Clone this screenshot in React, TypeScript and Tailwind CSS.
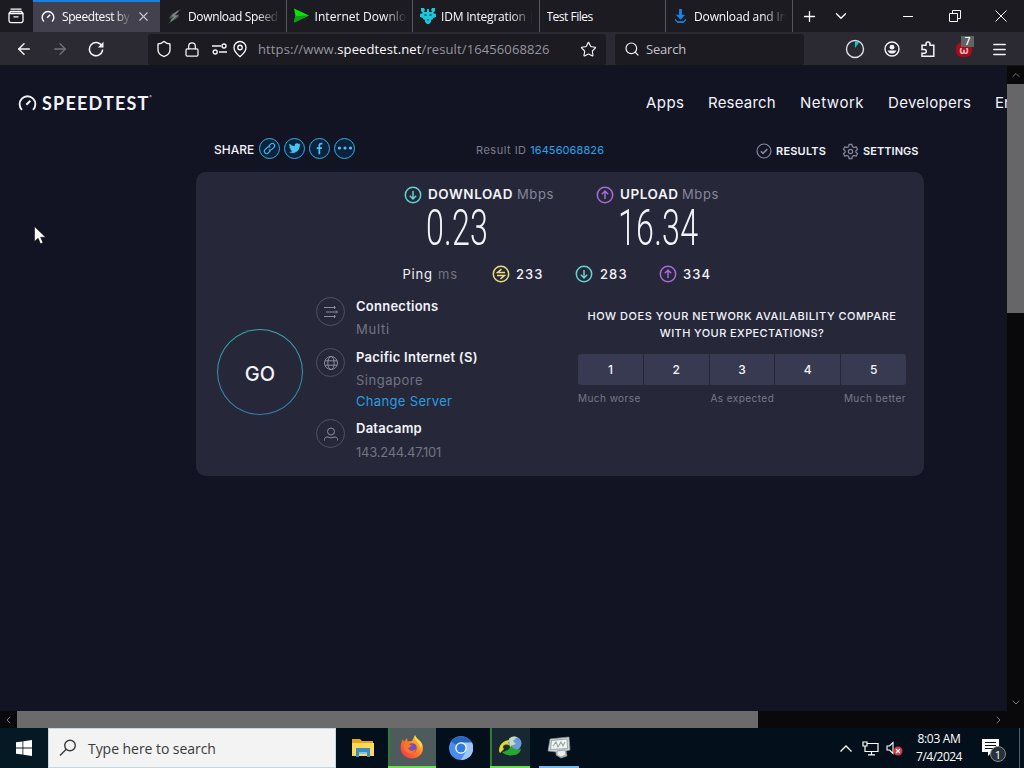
import type { ReactNode } from "react";
import {
  ArrowLeft,
  ArrowRight,
  ChevronDown,
  ChevronUp,
  ChevronLeft,
  ChevronRight,
  Lock,
  MapPin,
  Menu,
  Plus,
  Search,
  Shield,
  Star,
  X,
} from "lucide-react";

const ui = "font-['Open_Sans','Noto_Sans',sans-serif]";
const fade = "[mask-image:linear-gradient(to_right,black_75%,transparent_100%)]";

function Gauge({ className }: { className: string }) {
  return (
    <svg viewBox="0 0 20 18" className={className} fill="none" stroke="currentColor" strokeWidth="2">
      <path d="M4.2 16.2A8.3 8.3 0 1 1 15.8 16.2" />
      <path d="M8.8 10.8L13 6.6" strokeWidth="2.2" />
    </svg>
  );
}

function Tab({ title, icon, textClass, plain }: { title: string; icon?: ReactNode; textClass?: string; plain?: boolean }) {
  return (
    <div className="flex h-8 w-[126.5px] shrink-0 items-center border-r border-[#56555f] pl-[7px]">
      {icon && <span className="mr-[6px] flex w-[15px] shrink-0 justify-center">{icon}</span>}
      <span className={`w-[92px] overflow-hidden pt-[2px] whitespace-nowrap text-[12px] ${textClass ?? ""} ${plain ? "" : fade}`}>
        {title}
      </span>
    </div>
  );
}

function TabBar() {
  return (
    <div className={`flex h-8 shrink-0 items-center bg-[#1c1b22] text-[#fbfbfe] ${ui}`}>
      <div className="flex w-[33px] justify-center pr-px">
        <svg viewBox="0 0 16 16" className="h-4 w-4" fill="none" stroke="currentColor" strokeWidth="1.3">
          <path d="M2.5 1.2h11M1 5.500v7.300a1.8 1.8 0 0 0 1.8 1.8h10.400a1.8 1.8 0 0 0 1.8-1.8V5.500zM1 5.500l1.500-2h11l1.500 2M5.500 8.800h5" />
        </svg>
      </div>
      <div className="flex h-8 w-[127px] items-center border-t-2 border-[#1581e8] bg-[#42414d] pl-2">
        <Gauge className="mb-[2px] h-[13px] w-[14px]" />
        <span className={`ml-[7px] w-[70px] overflow-hidden whitespace-nowrap text-[12px] tracking-[-0.4px] ${fade}`}>
          Speedtest by
        </span>
        <X className="mb-[2px] ml-[4px] h-[15px] w-[15px] text-[#c8c8d0]" strokeWidth={1.8} />
      </div>
      <Tab
        title="Download Speed"
        textClass="tracking-[-0.35px]"
        icon={
          <svg viewBox="0 0 16 16" className="h-[15px] w-[15px]">
            <path d="M15 0L5 5 2 10h4l-5 6 11-7 1-3H9z" fill="#4c5452" />
            <path d="M12 2L6 7.500h4l-6 5" fill="none" stroke="#87918e" strokeWidth="1.200" />
          </svg>
        }
      />
      <Tab
        title="Internet Downlo"
        textClass="tracking-[0.05px]"
        icon={
          <svg viewBox="0 0 16 16" className="h-[16px] w-[16px]">
            <path d="M0 0L16 7.500 0 15 1.500 7.500z" fill="#0be30b" />
            <path d="M0 15L16 7.500 1.500 8z" fill="#07a312" />
          </svg>
        }
      />
      <Tab
        title="IDM Integration |"
        textClass="tracking-[-0.2px]"
        icon={
          <svg viewBox="0 0 16 16" className="h-[16px] w-[16px] shrink-0" fill="#18c8dc">
            <path d="M1 0l3 0 1 2-1 2h3V1h2v3h3l-1-2 1-2h3v3l-2 2 3 1v3l-3 1v1l-2 1v2l-3 3-3-3v-2l-2-1v-1L0 9V6l3-1-2-2z" />
            <path d="M4.500 6h2v2h-2zM9.500 6h2v2h-2zM7 11h2v1.500H7z" fill="#11697e" />
          </svg>
        }
      />
      <Tab title="Test Files" textClass="tracking-[-0.5px]" plain />
      <Tab
        title="Download and In"
        textClass="tracking-[-0.15px]"
        icon={
          <svg viewBox="0 0 16 16" className="h-[15px] w-[15px]" fill="#1683e8">
            <path d="M6.500 0h3v6H13l-5 5.500L3 6h3.500zM2 10l3 3h6l3-3v2l-3 3H5l-3-3z" />
          </svg>
        }
      />
      <Plus className="ml-[8px] h-[17px] w-[17px]" strokeWidth={1.8} />
      <ChevronDown className="ml-[14px] h-[18px] w-[18px]" strokeWidth={1.8} />
      <div className="ml-auto flex items-center">
        <div className="h-px w-[10px] bg-white" />
        <svg viewBox="0 0 12 12" className="ml-[36px] h-3 w-3" fill="none" stroke="currentColor">
          <path d="M.5 3.500h8v8h-8zM3.500 3V.5h8v8H9" />
        </svg>
        <svg viewBox="0 0 12 12" className="mr-[17px] ml-[34px] h-3 w-3" stroke="currentColor">
          <path d="M.5.5l11 11M11.500.5l-11 11" />
        </svg>
      </div>
    </div>
  );
}

function NavBar() {
  return (
    <div className={`flex h-[34px] shrink-0 items-center border-b border-[#15151d] bg-[#2b2a33] pt-px text-[#f4f4f8] ${ui}`}>
      <ArrowLeft className="ml-[15px] h-[18px] w-[18px]" />
      <ArrowRight className="ml-[18px] h-[18px] w-[18px] text-[#74737c]" strokeWidth={1.7} />
      <svg viewBox="0 0 16 16" className="ml-[19px] h-4 w-4" fill="none" stroke="currentColor" strokeWidth="1.5">
        <path d="M13.800 5A6.600 6.600 0 1 0 14.600 8.500" />
        <path d="M15.500.8v5.700H9.800z" fill="currentColor" stroke="none" />
      </svg>
      <div className="ml-[44px] flex h-[31px] w-[458px] items-center rounded-[3px] bg-[#1c1b22]">
        <Shield className="ml-[7px] h-[18px] w-[18px]" strokeWidth={1.8} />
        <Lock className="ml-[11px] h-[17px] w-[16px]" strokeWidth={1.9} />
        <svg viewBox="0 0 16 12" className="ml-[12px] h-3 w-4" fill="none" stroke="currentColor" strokeWidth="1.4">
          <path d="M0 3h9M7 9h8" />
          <circle cx="12" cy="3" r="2" />
          <circle cx="3.200" cy="9" r="2" />
        </svg>
        <MapPin className="ml-[3px] h-[18px] w-[18px]" strokeWidth={1.8} />
        <span className="ml-[9px] w-[294px] pt-[2px] text-[13px] whitespace-nowrap tracking-[0.11px] text-[#96959e]">
          https://www.<span className="text-[#fbfbfe]">speedtest.net</span>/result/16456068826
        </span>
        <Star className="ml-[28px] h-[17px] w-[17px] shrink-0" strokeWidth={1.6} />
      </div>
      <div className="ml-[9px] flex h-[31px] w-[189px] items-center rounded-[3px] bg-[#1c1b22] pl-[9px]">
        <Search className="h-4 w-4" strokeWidth={1.8} />
        <span className="ml-[6px] pt-[2px] text-[13px] tracking-[-0.2px] text-[#c4c3cb]">Search</span>
      </div>
      <div className="mr-[16px] ml-auto flex items-center">
        <svg viewBox="0 0 20 20" className="h-5 w-5">
          <circle cx="10" cy="10" r="8.500" fill="none" stroke="#dedee5" strokeWidth="1.400" />
          <path d="M10 9V2.500a8 8 0 0 1 4 1z" fill="#00d5ce" />
        </svg>
        <svg viewBox="0 0 16 16" className="ml-[19px] h-4 w-4" fill="none" stroke="currentColor" strokeWidth="1.4">
          <circle cx="8" cy="8" r="7" />
          <circle cx="8" cy="6.200" r="2.400" fill="currentColor" stroke="none" />
          <path d="M3.700 9.500h8.600c-.9 2.400-2.500 3.100-4.300 3.100S4.600 11.900 3.700 9.500z" fill="currentColor" stroke="none" />
        </svg>
        <svg viewBox="0 0 16 16" className="ml-[20px] h-4 w-4" fill="none" stroke="currentColor" strokeWidth="1.5">
          <path d="M2 7V4.200h4V3a2 2 0 0 1 4 0v1.200h3.800v11H2v-3h2.500a1.800 1.800 0 0 0 0-3.600H2z" />
        </svg>
        <div className="relative ml-[20px] flex h-[15px] w-4 items-center justify-center rounded-[6px] bg-[#a50d1b]">
          <span className="text-[11px] leading-none font-bold text-[#f1bcc2]">ω</span>
          <span className="absolute -top-[6px] left-[5px] flex h-[11px] w-[13px] items-center justify-center bg-[#606465] text-[10px] leading-none font-semibold text-white">
            7
          </span>
        </div>
        <Menu className="ml-[19px] h-[17px] w-[17px]" strokeWidth={2} />
      </div>
    </div>
  );
}

function Ring({ children, className }: { children: ReactNode; className: string }) {
  return <span className={`flex shrink-0 items-center justify-center rounded-full ${className}`}>{children}</span>;
}

function DirIcon({ kind }: { kind: "down" | "up" | "ping" }) {
  const color = { down: "text-[#62d5cf]", up: "text-[#a66bd8]", ping: "text-[#e9df80]" }[kind];
  const path = {
    down: "M9 5v8M5.800 9.800L9 13l3.200-3.200",
    up: "M9 13V5M5.800 8.200L9 5l3.200 3.200",
    ping: "M13 7.600H5.500L9.500 4M5 10.400h7.500L8.500 14",
  }[kind];
  return (
    <svg viewBox="0 0 18 18" className={`h-[18px] w-[18px] shrink-0 ${color}`} fill="none" stroke="currentColor" strokeWidth="1.5">
      <circle cx="9" cy="9" r="7.700" />
      <path d={path} />
    </svg>
  );
}

function ShareRow() {
  const share = "h-[21px] w-[21px] border-[1.5px] border-[#2fb4e5] bg-[#0c213d] text-[#48c5ee] mr-[4px]";
  return (
    <div className="ml-[196px] flex h-[32px] w-[728px] items-center">
      <span className="ml-[18px] w-[45px] pt-[4px] text-[12px] font-medium">SHARE</span>
      <Ring className={share}>
        <svg viewBox="0 0 16 16" className="h-[13px] w-[13px]" fill="none" stroke="currentColor" strokeWidth="1.300">
          <path d="M7 5l2.500-2.500a2.600 2.600 0 0 1 4 4L10.500 9.500a2.600 2.600 0 0 1-3.500 0M9 11l-2.500 2.500a2.600 2.600 0 0 1-4-4L5.500 6.500a2.600 2.600 0 0 1 3.500 0" />
        </svg>
      </Ring>
      <Ring className={share}>
        <svg viewBox="0 0 24 24" className="h-[12px] w-[12px]" fill="currentColor">
          <path d="M23.600 4.900a9.800 9.800 0 0 1-2.800.8 4.900 4.900 0 0 0 2.100-2.700 9.900 9.900 0 0 1-3.100 1.200 4.900 4.900 0 0 0-8.400 4.500A14 14 0 0 1 1.300 3.500a4.900 4.900 0 0 0 1.500 6.600 5 5 0 0 1-2.200-.6 4.900 4.900 0 0 0 3.900 4.900 5 5 0 0 1-2.200.1 4.900 4.900 0 0 0 4.600 3.400A9.900 9.900 0 0 1 0 19.900a14 14 0 0 0 21.300-12.400z" />
        </svg>
      </Ring>
      <Ring className={share}>
        <svg viewBox="0 0 10 16" className="h-[13px] w-[9px]" fill="none" stroke="currentColor" strokeWidth="2.2">
          <path d="M8.500 2H7a2.200 2.200 0 0 0-2.200 2.300V15M1.500 7.500h6.500" />
        </svg>
      </Ring>
      <Ring className={share}>
        <svg viewBox="0 0 16 4" className="h-1 w-4" fill="currentColor">
          <circle cx="2.500" cy="2" r="1.600" />
          <circle cx="8" cy="2" r="1.600" />
          <circle cx="13.500" cy="2" r="1.600" />
        </svg>
      </Ring>
      <span className="ml-[117px] w-[134px] pt-[4px] text-[11px] whitespace-nowrap tracking-[0.5px] text-[#7c7d90]">
        Result ID <span className="tracking-[0.1px] text-[#2ba4ea]">16456068826</span>
      </span>
      <svg viewBox="0 0 16 16" className="mt-[6px] ml-auto h-4 w-4 text-[#85869a]" fill="none" stroke="currentColor" strokeWidth="1.200">
        <circle cx="8" cy="8" r="7" />
        <path d="M4.800 8.200l2.200 2.200 4.300-4.300" strokeWidth="1.600" />
      </svg>
      <span className="mt-[6px] ml-[4px] w-[52px] text-[11px] font-semibold tracking-[0.2px]">RESULTS</span>
      <svg viewBox="0 0 24 24" className="mt-[7px] ml-[14px] h-[17px] w-[17px] text-[#85869a]" fill="none" stroke="currentColor" strokeWidth="1.700">
        <path d="M10 2h4l.6 3 2.400 1.400 2.900-1 2 3.500-2.300 2v2.200l2.300 2-2 3.500-2.900-1-2.400 1.400-.6 3h-4l-.6-3L7 17.600l-2.900 1-2-3.500 2.300-2v-2.200l-2.300-2 2-3.500 2.900 1L9.400 5z" />
        <circle cx="12" cy="12" r="3" />
      </svg>
      <span className="mt-[6px] mr-[5px] ml-[4px] w-[56px] text-[11px] font-semibold tracking-[0.05px]">SETTINGS</span>
    </div>
  );
}

function Speed({ kind, label, value, labelClass }: { kind: "down" | "up"; label: string; value: string; labelClass: string }) {
  return (
    <div className="w-[192px] shrink-0">
      <div className="flex h-[19px] items-center whitespace-nowrap">
        <DirIcon kind={kind} />
        <span className={`ml-[6px] text-[13.5px] font-semibold ${labelClass}`}>{label}</span>
        <span className="text-[13px] tracking-[0.6px] text-[#85869a]">Mbps</span>
      </div>
      <div className="ml-[22px] h-[50px] w-max origin-left scale-x-[0.645] font-['Roboto',sans-serif] text-[50px] leading-[49px] font-light tracking-[0.3px]">
        {value}
      </div>
    </div>
  );
}

function Info({
  title,
  sub,
  link,
  icon,
  className,
  subClass,
}: {
  title: string;
  sub: string;
  link?: string;
  icon: ReactNode;
  className: string;
  subClass: string;
}) {
  return (
    <div className={`flex ${className}`}>
      <Ring className="mt-[1px] h-[29px] w-[29px] border border-[#50515f] text-[#8b8c9c]">{icon}</Ring>
      <div className="ml-[11px] whitespace-nowrap">
        <div className="h-[22px] text-[13px] leading-5 font-semibold tracking-[0.25px]">{title}</div>
        <div className={`h-[22px] text-[13px] leading-[23px] text-[#727385] ${subClass}`}>{sub}</div>
        {link && <div className="text-[13px] leading-5 tracking-[0.34px] text-[#2a9ce0]">{link}</div>}
      </div>
    </div>
  );
}

function ResultCard() {
  return (
    <div className="ml-[196px] h-[304px] w-[728px] rounded-[10px] bg-[#262839]">
      <div className="flex pt-[13px] pl-[208px]">
        <Speed kind="down" label="DOWNLOAD" value="0.23" labelClass="tracking-[0.55px] w-[89px]" />
        <Speed kind="up" label="UPLOAD" value="16.34" labelClass="tracking-[0.55px] w-[62px]" />
      </div>
      <div className="mt-[11px] flex h-[18px] items-center pl-[206.5px] text-[13px]">
        <span className="w-[89.5px] pt-px tracking-[0.75px]">
          Ping <span className="ml-px text-[#727385]">ms</span>
        </span>
        <DirIcon kind="ping" />
        <span className="ml-[6px] w-[59px] pt-px font-medium tracking-[1.1px]">233</span>
        <DirIcon kind="down" />
        <span className="ml-[7px] w-[59px] pt-px font-medium tracking-[1.1px]">283</span>
        <DirIcon kind="up" />
        <span className="ml-[6px] pt-px font-medium tracking-[1.1px]">334</span>
      </div>
      <div className="mt-[13px] flex">
        <div className="mt-[33px] ml-[21px] flex h-[86px] w-[86px] items-center justify-center rounded-full bg-linear-to-b from-[#36a9a8] to-[#347caf] p-[1.2px]">
          <div className="flex h-full w-full items-center justify-center rounded-full bg-[#262839] pt-[3px] text-[20px] font-medium tracking-[0.2px]">
            GO
          </div>
        </div>
        <div className="ml-[13px] w-[220px]">
          <Info
            title="Connections"
            sub="Multi"
            subClass="tracking-[0.75px]"
            className="h-[51px]"
            icon={
              <svg viewBox="0 0 16 16" className="h-4 w-4" fill="none" stroke="currentColor">
                <path d="M1 3.500h11M3 8h11M1 12.500h11M11 2l1.500 1.500L11 5M13 6.500L14.500 8 13 9.500M11 11l1.500 1.500L11 14" />
              </svg>
            }
          />
          <Info
            title="Pacific Internet (S)"
            sub="Singapore"
            subClass="tracking-[0.5px]"
            link="Change Server"
            className="h-[71px]"
            icon={
              <svg viewBox="0 0 16 16" className="h-4 w-4" fill="none" stroke="currentColor">
                <circle cx="8" cy="8" r="6.500" />
                <ellipse cx="8" cy="8" rx="3.200" ry="6.500" />
                <path d="M2 5.800h12M2 10.200h12" />
              </svg>
            }
          />
          <Info
            title="Datacamp"
            sub="143.244.47.101"
            subClass="tracking-[-0.25px] pt-px"
            className="h-[50px]"
            icon={
              <svg viewBox="0 0 16 16" className="h-4 w-4" fill="none" stroke="currentColor">
                <circle cx="8" cy="5.500" r="3.500" />
                <path d="M1.500 14.500v-1c0-1.500 1-2.500 2.500-2.500h1l3 1 3-1h1c1.500 0 2.500 1 2.500 2.500v1" />
              </svg>
            }
          />
        </div>
        <div className="mt-[12px] ml-[42px] w-[328px]">
          <p className="text-center text-[11px] leading-[17px] font-medium whitespace-nowrap">
            <span className="tracking-[0.52px]">HOW DOES YOUR NETWORK AVAILABILITY COMPARE</span>
            <br />
            <span className="tracking-[0.4px]">WITH YOUR EXPECTATIONS?</span>
          </p>
          <div className="mt-[12px] grid h-[31px] grid-cols-5 gap-px overflow-hidden rounded-[3px] bg-[#252638]">
            {[1, 2, 3, 4, 5].map((n) => (
              <button key={n} className="bg-[#383a52] text-[12px] font-medium">
                {n}
              </button>
            ))}
          </div>
          <div className="mt-[5px] flex justify-between text-[10px] leading-[16px] tracking-[0.45px] text-[#777889]">
            <span>Much worse</span>
            <span>As expected</span>
            <span>Much better</span>
          </div>
        </div>
      </div>
    </div>
  );
}

function Page() {
  return (
    <main className="relative w-[1007px] overflow-hidden bg-[#121424] font-['Inter','Open_Sans',sans-serif] text-[#f3f3fa]">
      <div className="flex h-[66px] items-center pt-[8px] pl-[18px]">
        <Gauge className="h-[18px] w-[19px]" />
        <span className="ml-[5px] font-['Lato',sans-serif] text-[18px] font-bold tracking-[1.2px]">SPEEDTEST</span>
        <span className="mb-[12px] text-[3px]">®</span>
        <nav className="absolute left-[646px] flex text-[15px] whitespace-nowrap">
          <span className="w-[62px] tracking-[0.45px]">Apps</span>
          <span className="w-[92px] tracking-[0.2px]">Research</span>
          <span className="w-[88px] tracking-[0.55px]">Network</span>
          <span className="w-[107px] tracking-[0.3px]">Developers</span>
          <span>Enterprise</span>
        </nav>
      </div>
      <ShareRow />
      <div className="h-[8px]" />
      <ResultCard />
      <svg viewBox="0 0 12 19" className="absolute top-[160px] left-[34px] h-[19px] w-3">
        <path d="M.5.5v15l3.600-3.300 2.400 5.600 2.500-1.100-2.400-5.500h5z" fill="white" stroke="#111" strokeWidth=".6" />
      </svg>
    </main>
  );
}

function Taskbar() {
  return (
    <div className={`flex h-10 shrink-0 items-center bg-[#03101b] text-white ${ui}`}>
      <div className="flex h-10 w-12 items-center justify-center bg-[#041923]">
        <svg viewBox="0 0 16 16" className="h-4 w-4" fill="white">
          <path d="M0 2.300l6.500-.9v6.200H0zM7.300 1.300L16 0v7.600H7.300zM0 8.400h6.500v6.200L0 13.700zM7.300 8.400H16V16l-8.700-1.300z" />
        </svg>
      </div>
      <div className="flex h-10 w-[288px] items-center border border-[#c8d5dc] bg-[#f3f3f3] pl-[10px] text-[#3a3a3a]">
        <svg viewBox="0 0 18 18" className="h-[18px] w-[18px]" fill="none" stroke="currentColor" strokeWidth="1.400">
          <circle cx="11" cy="6.500" r="5.300" />
          <path d="M7.200 10.300L1 16.500" />
        </svg>
        <span className="ml-[11px] text-[14px] tracking-[-0.05px]">Type here to search</span>
      </div>
      <div className="ml-[2px] flex h-10 w-[50px] items-center justify-center">
        <svg viewBox="0 0 22 20" className="h-5 w-[22px]">
          <path d="M0 1h8l2 2h11v15H0z" fill="#e7a71c" />
          <path d="M0 5h22v13H0z" fill="#ffd75b" />
          <path d="M4 10h14v9h-3v-4H7v4H4z" fill="#3d8bc2" />
          <path d="M7 14h8v2H7z" fill="#8ac3dc" />
        </svg>
      </div>
      <div className="flex h-10 w-12 items-center justify-center border-b-2 border-[#69df4b] bg-[#4d5b5d] shadow-[inset_2px_0_0_#34783a]">
        <svg viewBox="0 0 24 24" className="h-6 w-6">
          <defs>
            <linearGradient id="fox" x1="1" y1="0" x2="0" y2="1">
              <stop offset="0" stopColor="#ffe04b" />
              <stop offset=".5" stopColor="#ff7b24" />
              <stop offset="1" stopColor="#f02961" />
            </linearGradient>
          </defs>
          <path d="M3 4l1 3 3-4 .5 3.500L12 6l3-6c0 3 3 4 5 6s3 4.500 3 7c0 6-5 10.500-11 10.500S.7 19 .7 13C.7 9 1.500 6.500 3 4z" fill="url(#fox)" />
          <circle cx="12" cy="13" r="4.800" fill="#7651b8" />
          <path d="M4 10c3-2 6-1 8 1-2 0-2 2-4 2 1 3 5 4 8 1-1 4-4 5-7 4-4-1-5-4-5-8z" fill="#ff7428" />
          <path d="M15 0c-1 4 1 5 3 8 2 2 2 4 2 6l2-4c-1-5-6-6-7-10z" fill="#ffdf45" />
        </svg>
      </div>
      <div className="flex h-10 w-[54px] items-center justify-center pr-[4px]">
        <svg viewBox="0 0 24 24" className="h-6 w-6">
          <circle cx="12" cy="12" r="12" fill="#4b8ce9" />
          <path d="M12 12L2 5.500A12 12 0 0 1 22.500 6.500z" fill="#2865bd" />
          <path d="M12 6.500h11A12 12 0 0 1 12 24l5-9z" fill="#9bc7fa" />
          <circle cx="12" cy="12" r="5.800" fill="#fff" />
          <circle cx="12" cy="12" r="4.500" fill="#337bdc" />
        </svg>
      </div>
      <div className="flex h-10 w-[40px] items-center justify-center border-b-2 border-[#69df4b] bg-[#182832] shadow-[inset_2px_0_0_#34783a]">
        <svg viewBox="0 0 24 22" className="h-[22px] w-6">
          <circle cx="16.500" cy="7.500" r="7" fill="#6d98dc" />
          <path d="M11 3c2-3 6-3 8-2l-4 4 3 3-6 2z" fill="#c4dfc0" />
          <path d="M1 15C1 8 6 4 12 4l-2 3 3 4-6 1-5 5z" fill="#e3d736" />
          <path d="M4 16c4-1 7-2 9-6 2 3 6 4 10 3-1 4-4 6-7 6-5 1-9 0-12-3z" fill="#26a72d" />
          <ellipse cx="8.500" cy="11" rx="3.500" ry="2.500" fill="#17351b" />
        </svg>
      </div>
      <div className="ml-[9px] flex h-10 w-[40px] items-center justify-center border-b-2 border-[#76b9ed]">
        <svg viewBox="0 0 24 24" className="h-6 w-6" stroke="#7e8c91" strokeWidth=".7">
          <path d="M3 4l9-1 10-1 1 13-4 1 1 5-6 2-5-3v-3l-8-1z" fill="#d0d6d6" />
          <path d="M4.500 5.500L20 4l.5 9.500-17 1z" fill="#eef5f2" />
          <path d="M6 11l3-4 2 5 3-5 2 4 2-4" fill="none" stroke="#9aa8a5" strokeWidth="1.200" />
          <path d="M10 16l8-1 1 5-5 2-4-2z" fill="#eceeee" />
        </svg>
      </div>
      <div className="ml-auto flex h-10 items-center">
        <svg viewBox="0 0 12 7" className="mr-[4px] h-[7px] w-3" fill="none" stroke="currentColor" strokeWidth="1.300">
          <path d="M.5 6.500L6 1l5.500 5.500" />
        </svg>
        <svg viewBox="0 0 17 15" className="ml-[6px] h-[15px] w-[17px]" fill="none" stroke="currentColor" strokeWidth="1.200">
          <path d="M5 2.500h11v8H3V6M9.500 10.500v3M6 13.800h7M1 1h4v4H1zM3 5v5" />
        </svg>
        <svg viewBox="0 0 17 15" className="ml-[7px] h-[15px] w-[17px]">
          <path d="M1 5h2.500L7 1.500v11L3.500 9H1z" fill="none" stroke="white" strokeWidth="1.100" />
          <circle cx="12" cy="10" r="4.500" fill="#d7353f" />
          <path d="M10 8l4 4M14 8l-4 4" stroke="white" strokeWidth="1.200" />
        </svg>
        <div className="ml-[8px] w-[56px] text-center text-[12px] leading-[18px] whitespace-nowrap">
          <div className="tracking-[-0.3px]">8:03 AM</div>
          <div className="tracking-[-0.5px]">7/4/2024</div>
        </div>
        <div className="relative ml-[15px] h-[24px] w-[25px]">
          <svg viewBox="0 0 17 17" className="mt-[3px] h-[17px] w-[17px]">
            <path d="M0 0h17v13h-7l-4 4v-4H0z" fill="white" />
            <path d="M3 3.500h11M3 6.500h11M3 9.500h8" stroke="#041019" />
          </svg>
          <span className="absolute top-[10px] left-[8px] flex h-4 w-4 items-center justify-center rounded-full border border-[#858b90] bg-[#263139] text-[11px] leading-none">
            1
          </span>
        </div>
        <div className="ml-[12px] h-10 w-[5px] border-l border-[#54616a]" />
      </div>
    </div>
  );
}

export default function App() {
  return (
    <div className="flex h-[768px] w-[1024px] flex-col overflow-hidden">
      <TabBar />
      <NavBar />
      <div className="flex h-[645px] shrink-0">
        <Page />
        <div className="flex w-[17px] flex-col items-center bg-[#09090c] text-[#77777b]">
          <ChevronUp className="h-[18px] w-3" />
          <div className="h-[229px] w-full bg-[#666669]" />
          <ChevronDown className="mt-auto h-[17px] w-3" />
        </div>
      </div>
      <div className="flex h-[17px] shrink-0 items-center bg-[#09090c] text-[#77777b]">
        <ChevronLeft className="h-3 w-[17px]" />
        <div className="h-[17px] w-[741px] bg-[#6b6b6b]" />
        <ChevronRight className="mr-[17px] ml-auto h-3 w-[17px]" />
      </div>
      <Taskbar />
    </div>
  );
}
